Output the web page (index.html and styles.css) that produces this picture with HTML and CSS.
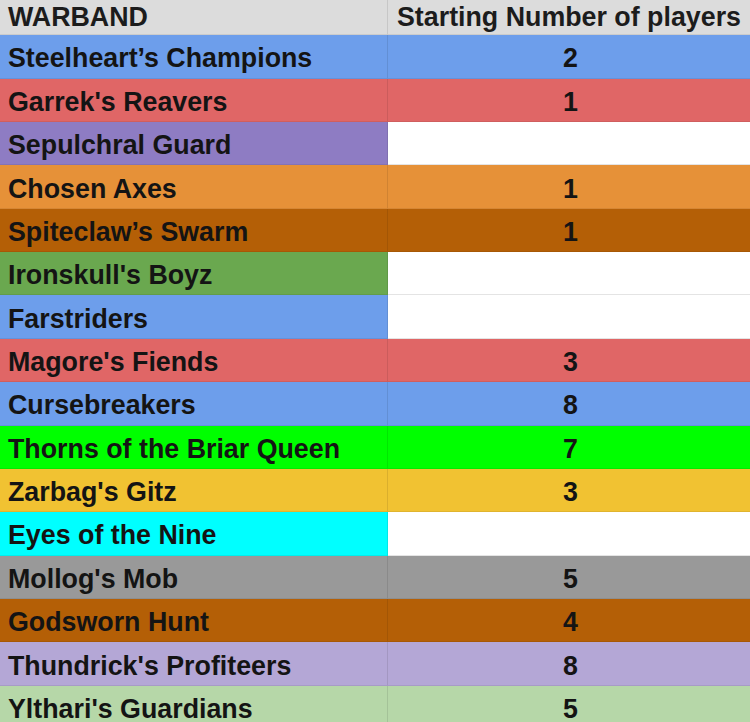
FILE: index.html
```html
<!DOCTYPE html>
<html>
<head>
<meta charset="utf-8">
<link rel="stylesheet" href="styles.css">
</head>
<body>
<div class="sheet">
  <div class="cell head name">WARBAND</div>
  <div class="cell head num">Starting Number of players</div>

  <div class="cell name blue">Steelheart’s Champions</div>
  <div class="cell num blue">2</div>

  <div class="cell name red">Garrek's Reavers</div>
  <div class="cell num red">1</div>

  <div class="cell name purple">Sepulchral Guard</div>
  <div class="cell num empty"></div>

  <div class="cell name orange">Chosen Axes</div>
  <div class="cell num orange">1</div>

  <div class="cell name brown">Spiteclaw’s Swarm</div>
  <div class="cell num brown">1</div>

  <div class="cell name green">Ironskull's Boyz</div>
  <div class="cell num empty"></div>

  <div class="cell name blue">Farstriders</div>
  <div class="cell num empty"></div>

  <div class="cell name red">Magore's Fiends</div>
  <div class="cell num red">3</div>

  <div class="cell name blue">Cursebreakers</div>
  <div class="cell num blue">8</div>

  <div class="cell name lime">Thorns of the Briar Queen</div>
  <div class="cell num lime">7</div>

  <div class="cell name yellow">Zarbag's Gitz</div>
  <div class="cell num yellow">3</div>

  <div class="cell name cyan">Eyes of the Nine</div>
  <div class="cell num empty"></div>

  <div class="cell name grey">Mollog's Mob</div>
  <div class="cell num grey">5</div>

  <div class="cell name brown">Godsworn Hunt</div>
  <div class="cell num brown">4</div>

  <div class="cell name lavender">Thundrick's Profiteers</div>
  <div class="cell num lavender">8</div>

  <div class="cell name mint">Ylthari's Guardians</div>
  <div class="cell num mint">5</div>
</div>
</body>
</html>
```

FILE: styles.css
```css
html, body {
  margin: 0;
  padding: 0;
  background: #ffffff;
}

.sheet {
  display: grid;
  grid-template-columns: 388px 1fr;
  grid-template-rows: 35.3px;
  grid-auto-rows: 43.36px;
  width: 750px;
  height: 722px;
  overflow: hidden;
  font-family: "Liberation Sans", Arial, sans-serif;
  font-weight: bold;
  font-size: 26.8px;
  color: #141414;
}

.cell {
  display: flex;
  align-items: center;
  box-sizing: border-box;
  border-bottom: 1px solid rgba(0, 0, 0, 0.07);
  white-space: nowrap;
  overflow: hidden;
  padding-top: 5px;
}

.name {
  padding-left: 8px;
  border-right: 1px solid rgba(0, 0, 0, 0.09);
}

.num {
  justify-content: center;
  padding-left: 3px;
}

.head {
  background: #dcdcdc;
  color: #1c1c1c;
  padding-top: 0;
}

.head.num {
  justify-content: flex-start;
  padding-left: 9px;
}

.empty { background: #ffffff; border-bottom-color: #e4e4e4; }
.blue { background: #6d9eeb; }
.red { background: #e06666; }
.purple { background: #8e7cc3; }
.orange { background: #e69138; }
.brown { background: #b45f06; }
.green { background: #6aa84f; }
.lime { background: #00ff00; }
.yellow { background: #f1c232; }
.cyan { background: #00ffff; }
.grey { background: #999999; }
.lavender { background: #b4a7d6; }
.mint { background: #b6d7a8; }
```
